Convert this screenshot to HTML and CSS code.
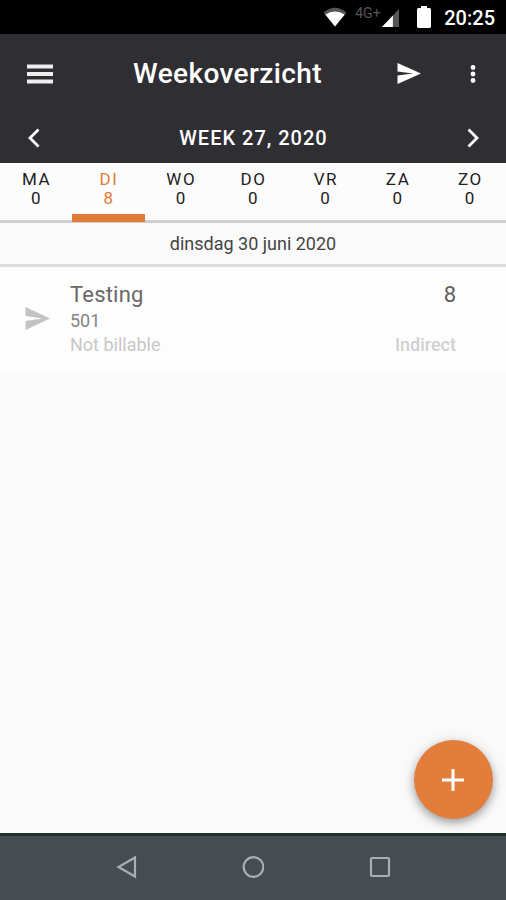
FILE: index.html
```html
<!DOCTYPE html>
<html lang="nl">
	<head>
		<meta charset="utf-8">
		<title>Weekoverzicht</title>
		<link rel="stylesheet" href="styles.css">
	</head>
	<body>
		<div class="status">
			<svg class="wifi" width="24" height="20" viewBox="0 0 26 20" preserveAspectRatio="none">
				<path fill="#555" d="M0.500 5.500Q13 -4 25.500 5.500L13 19.500z"/>
				<path fill="#fff" d="M2.500 7.600Q13 1.200 23.500 7.600L13 19.500z"/>
			</svg>
			<span class="network">4G+</span>
			<svg class="signal" width="17" height="18" viewBox="0 0 18 18" preserveAspectRatio="none">
				<path fill="#555" d="M18 0V18H0z"/>
				<path fill="#fff" d="M11.500 6.500V18H0z"/>
			</svg>
			<svg class="battery" width="14" height="22" viewBox="0 0 14 22">
				<path fill="#fff" d="M4 0h6v2h2.500q1.500 0 1.500 1.500v17q0 1.500-1.500 1.500h-11Q0 22 0 20.500v-17Q0 2 1.500 2H4z"/>
			</svg>
			<span class="clock">20:25</span>
		</div>

		<header class="header">
			<div class="toolbar">
				<svg class="menu" width="26" height="20" viewBox="0 0 26 20">
					<path fill="#eee" d="M0 .5h26v4H0zM0 8h26v4H0zM0 15.500h26v4H0z"/>
				</svg>
				<h1>Weekoverzicht</h1>
				<svg class="send" width="24" height="21" viewBox="0 0 24 21">
					<path fill="#fff" d="M.5 0L24 10.500L.5 21V12.500L16 10.500L.5 8.500z"/>
				</svg>
				<svg class="more" width="6" height="20" viewBox="0 0 6 20">
					<circle cx="3" cy="3.500" r="2.400" fill="#fff"/>
					<circle cx="3" cy="10" r="2.400" fill="#fff"/>
					<circle cx="3" cy="16.500" r="2.400" fill="#fff"/>
				</svg>
			</div>
			<div class="week">
				<svg width="12" height="20" viewBox="0 0 12 20">
					<path class="chevron" d="M10.500 1.500L2 10L10.500 18.500"/>
				</svg>
				<span>WEEK 27, 2020</span>
				<svg width="12" height="20" viewBox="0 0 12 20">
					<path class="chevron" d="M1.500 1.500L10 10L1.500 18.500"/>
				</svg>
			</div>
		</header>

		<div class="days">
			<div class="day">MA<br>0</div>
			<div class="day active">DI<br>8</div>
			<div class="day">WO<br>0</div>
			<div class="day">DO<br>0</div>
			<div class="day">VR<br>0</div>
			<div class="day">ZA<br>0</div>
			<div class="day">ZO<br>0</div>
		</div>
		<div class="date">dinsdag 30 juni 2020</div>

		<main>
			<div class="entry">
				<svg width="25" height="23" viewBox="0 0 25 23">
					<path fill="#c3c3c3" d="M.5 0L25 11.500L.5 23V14L17.500 11.500L.5 9z"/>
				</svg>
				<div class="info">
					<div class="project">Testing</div>
					<div class="code">501</div>
					<div class="billable">Not billable</div>
				</div>
				<div class="hours">
					<div class="amount">8</div>
					<div class="type">Indirect</div>
				</div>
			</div>
			<button class="add">
				<svg width="22" height="22" viewBox="0 0 22 22">
					<path fill="#fff" d="M9.500 0h3v9.500H22v3h-9.500V22h-3v-9.500H0v-3h9.500z"/>
				</svg>
			</button>
		</main>

		<nav class="nav">
			<svg width="22" height="24" viewBox="0 0 22 24">
				<path d="M20 2.500V21.500L3.500 12z"/>
			</svg>
			<svg width="22" height="24" viewBox="0 0 22 24">
				<circle cx="11.500" cy="12" r="9.800"/>
			</svg>
			<svg width="22" height="24" viewBox="0 0 22 24">
				<rect x="2" y="3" width="18" height="18" rx="1"/>
			</svg>
		</nav>
	</body>
</html>
```
FILE: styles.css
```css
* {
	box-sizing: border-box;
}

body {
	display: flex;
	flex-direction: column;
	height: 900px;
	margin: 0;
	background: #fafafa;
	font-family: Roboto, sans-serif;
}

svg {
	display: block;
	flex: none;
}

.status {
	display: flex;
	height: 34px;
	padding-right: 11px;
	justify-content: flex-end;
	background: #000;
	color: #fff;
}

.wifi {
	margin: 7px 8px 0 0;
}

.network {
	width: 27px;
	margin-top: 5px;
	font-size: 14px;
	line-height: 17px;
	color: #555;
}

.signal {
	margin: 9px 18px 0 0;
}

.battery {
	margin: 6px 13px 0 0;
}

.clock {
	font-size: 20px;
	font-weight: 500;
	line-height: 36px;
}

.header {
	height: 129px;
	background: #2f2e33;
	color: #fff;
}

.toolbar {
	display: flex;
	align-items: center;
	height: 79px;
	padding: 0 30px 0 27px;
}

.toolbar h1 {
	flex: 1;
	margin: 0 0 0 80px;
	font-size: 28px;
	font-weight: 500;
	letter-spacing: .4px;
}

.send {
	margin-right: 49px;
}

.week {
	display: flex;
	align-items: center;
	justify-content: space-between;
	height: 50px;
	padding: 0 27px 0 28px;
	font-size: 20px;
	font-weight: 500;
	letter-spacing: 1px;
}

.chevron {
	fill: none;
	stroke: #fff;
	stroke-width: 2.800;
}

.days {
	display: grid;
	grid-template-columns: repeat(7, 1fr);
	height: 60px;
	border-bottom: 3px solid #cfcfcf;
	background: #fcfcfc;
}

.day {
	height: 59px;
	padding: 7px 0 0 1px;
	font-size: 17px;
	line-height: 19px;
	letter-spacing: 1.500px;
	text-align: center;
	color: #222;
}

.active {
	border-bottom: 8px solid #e27b36;
	color: #e27b36;
}

.date {
	height: 44px;
	border-bottom: 3px solid #dcdcdc;
	font-size: 18px;
	line-height: 41px;
	text-align: center;
	color: #444;
	box-shadow: 0 1px 2px #e8e8e8;
}

main {
	flex: 1;
	position: relative;
}

.entry {
	display: flex;
	height: 105px;
	padding: 0 50px 0 25px;
	background: #fdfdfd;
}

.entry svg {
	margin: 40px 20px 0 0;
}

.info {
	flex: 1;
	padding-top: 14px;
}

.project {
	font-size: 22px;
	line-height: 27px;
	letter-spacing: .2px;
	color: #686868;
}

.code {
	font-size: 18px;
	line-height: 26px;
	color: #858585;
}

.billable {
	font-size: 18px;
	line-height: 22px;
	color: #c8c8c8;
}

.hours {
	display: flex;
	flex-direction: column;
	justify-content: space-between;
	padding: 14px 0 16px;
	text-align: right;
}

.amount {
	font-size: 22px;
	line-height: 27px;
	color: #606060;
}

.type {
	font-size: 18px;
	font-weight: 500;
	line-height: 22px;
	color: #d0d0d0;
}

/* floats over the list */
.add {
	position: absolute;
	right: 13px;
	bottom: 14px;
	display: flex;
	align-items: center;
	justify-content: center;
	width: 79px;
	height: 79px;
	padding: 0 1px 0 0;
	border: 0;
	border-radius: 50%;
	background: #e37d3c;
	box-shadow: 0 4px 8px rgba(0, 0, 0, .3), 0 2px 16px rgba(0, 0, 0, .12);
}

.nav {
	display: flex;
	justify-content: center;
	gap: 105px;
	height: 67px;
	padding-top: 19px;
	border-top: 3px solid #1f302f;
	background: #464d52;
}

.nav svg {
	fill: none;
	stroke: #a9aeb1;
	stroke-width: 2.200;
}
```
